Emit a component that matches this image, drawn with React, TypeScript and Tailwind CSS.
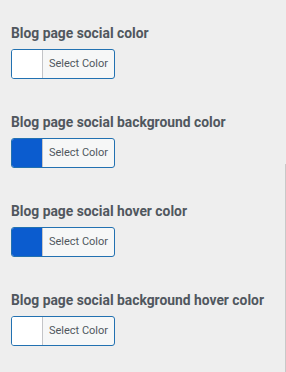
const rows = [
  { label: "Blog page social color", color: "#ffffff" },
  { label: "Blog page social background color", color: "#0b5ccf" },
  { label: "Blog page social hover color", color: "#0b5ccf" },
  { label: "Blog page social background hover color", color: "#ffffff" },
]

function ColorButton({ color }: { color: string }) {
  return (
    <button
      type="button"
      className="flex h-[30px] w-[104px] overflow-hidden rounded-[3px] border border-[#2271b1] bg-[#f6f7f7]"
    >
      <span className="h-full w-[31px] border-r border-[#c3c4c7]" style={{ backgroundColor: color }} />
      <span className="flex h-full flex-1 items-center justify-center text-[11px] text-[#50575e]">
        Select Color
      </span>
    </button>
  )
}

export default function App() {
  return (
    <div
      className="relative h-[372px] w-[286px] overflow-hidden bg-[#eeeeee]"
      style={{ fontFamily: "Roboto, 'Liberation Sans', sans-serif" }}
    >
      <div className="flex flex-col gap-[35px] px-[11px] pt-[25px]">
        {rows.map((row) => (
          <div key={row.label} className="flex flex-col gap-[8px]">
            <h3 className="text-[13.85px] font-bold leading-[16px] text-[#50575e]">{row.label}</h3>
            <ColorButton color={row.color} />
          </div>
        ))}
      </div>
      <div className="absolute right-0 top-[164px] bottom-0 w-px bg-[#c8c8c8]" />
    </div>
  )
}
